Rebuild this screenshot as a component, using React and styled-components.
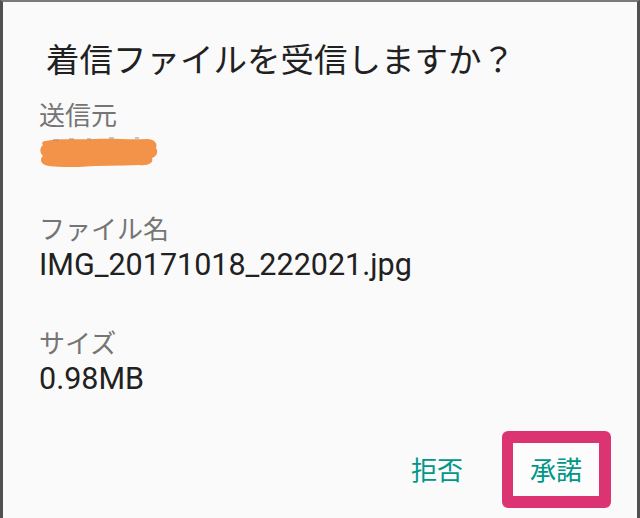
import React from "react";
import styled, { createGlobalStyle } from "styled-components";

const GlobalStyle = createGlobalStyle`
  html, body {
    margin: 0;
    padding: 0;
    background: #fafafa;
  }
  body {
    font-family: "Roboto", "Noto Sans CJK JP", sans-serif;
  }
`;

const Dialog = styled.div`
  box-sizing: border-box;
  width: 640px;
  height: 518px;
  display: flex;
  flex-direction: column;
  padding: 40px 26px 10px 36px;
  background: #fafafa;
  border-left: 3px solid #505050;
  border-right: 3px solid #505050;
  border-top: 2px solid #7a7a7a;
  overflow: hidden;
`;

const Title = styled.h1`
  margin: 0 0 27px 7px;
  font-family: "Noto Sans CJK JP", sans-serif;
  font-size: 33.5px;
  line-height: 32px;
  font-weight: 400;
  color: #212121;
`;

const Fields = styled.div`
  display: flex;
  flex-direction: column;
  gap: 49px;
`;

const Field = styled.div`
  display: flex;
  flex-direction: column;
`;

const Label = styled.div`
  margin-bottom: 9px;
  font-family: "Noto Sans CJK JP", sans-serif;
  font-size: 26px;
  line-height: 26px;
  color: #757575;
`;

const Value = styled.div`
  height: 30px;
  font-size: 30.5px;
  line-height: 30px;
  color: #212121;
`;

const Actions = styled.div`
  margin-top: auto;
  display: flex;
  justify-content: flex-end;
  align-items: center;
`;

const Button = styled.button`
  border: 0;
  background: transparent;
  padding: 13px 17px 14px;
  font-family: "Noto Sans CJK JP", sans-serif;
  font-size: 26px;
  line-height: 26px;
  color: #009688;
  cursor: pointer;
`;

const Highlight = styled.div`
  margin-left: 22px;
  border: 12px solid #dc3472;
  border-left-width: 11px;
  border-radius: 6px;
  background: #fcfcfc;
  display: flex;
`;

const Redacted = () => (
  <svg width="120" height="32" viewBox="0 0 120 32" style={{ display: "block" }}>
    <path
      d="M7 5 C20 2 40 4 55 3 C72 2 92 4 108 3 C115 3 119 7 117 12 C120 16 117 21 113 22 C115 27 109 30 100 29 C80 30 60 29 40 31 C25 31 12 31 6 29 C1 27 1 22 4 20 C0 16 1 11 4 9 C2 7 4 5 7 5 Z"
      fill="#f3934a"
    />
    <path d="M14 4 h6 M30 3 h5 M48 3 h4 M70 2 h5 M96 2 h4" stroke="#9a8f86" strokeWidth="1" />
  </svg>
);

export default function App() {
  return (
    <>
      <GlobalStyle />
      <Dialog>
        <Title>着信ファイルを受信しますか？</Title>
        <Fields>
          <Field>
            <Label>送信元</Label>
            <Value>
              <Redacted />
            </Value>
          </Field>
          <Field>
            <Label>ファイル名</Label>
            <Value>IMG_20171018_222021.jpg</Value>
          </Field>
          <Field>
            <Label>サイズ</Label>
            <Value>0.98MB</Value>
          </Field>
        </Fields>
        <Actions>
          <Button>拒否</Button>
          <Highlight>
            <Button>承諾</Button>
          </Highlight>
        </Actions>
      </Dialog>
    </>
  );
}
